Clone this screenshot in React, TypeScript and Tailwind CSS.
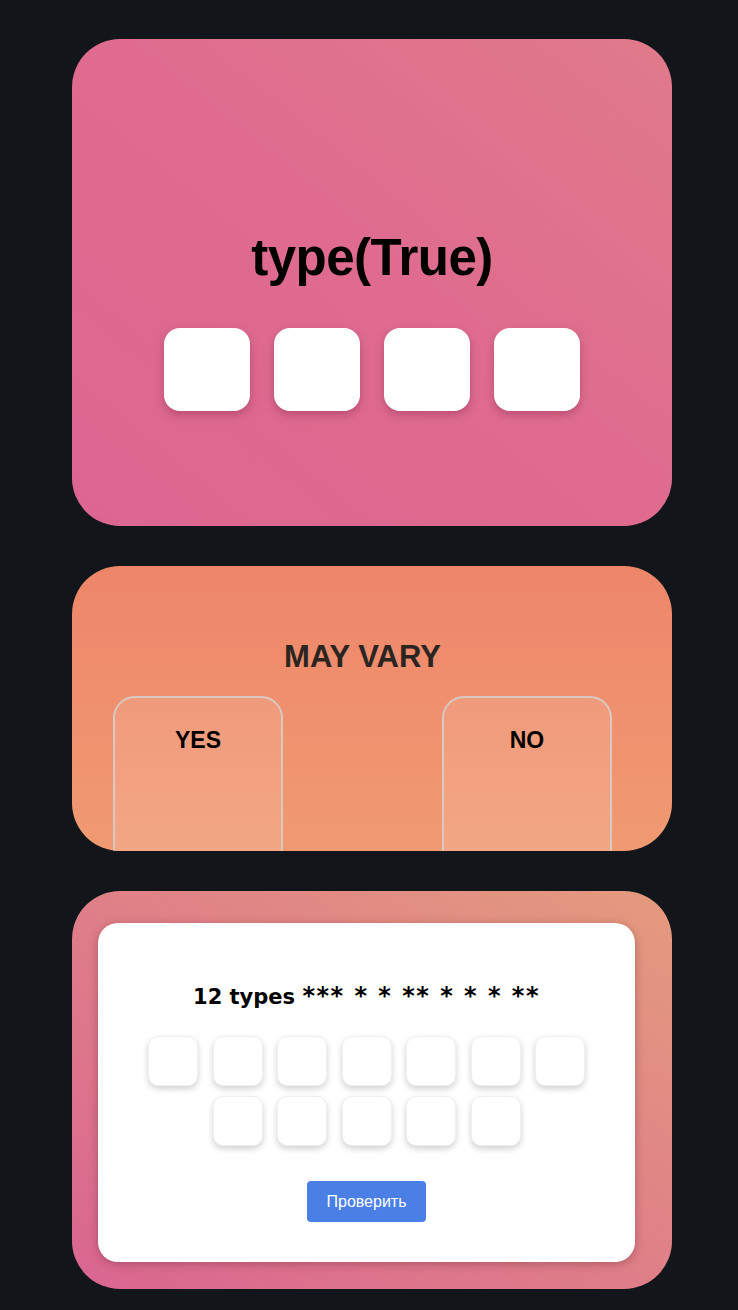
import React from 'react';

const sans = { fontFamily: '"Liberation Sans", Arial, sans-serif' };

// Big pink card with 4 answer slots
const TypeCard = () => (
  <div className="w-[600px] h-[487px] rounded-[48px] bg-linear-to-tr from-[#dc6690] via-[#df6b8f] to-[#e07a8a] flex flex-col items-center pt-[189px]">
    <h1 className="text-[51px] leading-[60px] font-bold text-black tracking-[-0.5px]" style={sans}>type(True)</h1>
    <div className="flex gap-[24px] mt-[40px]">
      {[0, 1, 2, 3].map((i) => (
        <div key={i} className="w-[86px] h-[83px] rounded-[16px] bg-white shadow-[0_4px_8px_rgba(120,30,60,0.35)]" />
      ))}
    </div>
  </div>
);

// Orange card with two drop zones
const VaryCard = () => (
  <div className="w-[600px] h-[285px] rounded-[48px] overflow-hidden bg-linear-to-b from-[#ee866a] to-[#f09a72] pl-[41px] pr-[60px] pt-[73px]" style={sans}>
    <h2 className="text-center text-[31px] leading-[36px] font-bold text-[#2b2522]">MAY VARY</h2>
    <div className="flex justify-between mt-[21px]">
      {['YES', 'NO'].map((label) => (
        <div key={label} className="w-[170px] h-[220px] rounded-[22px] border-2 border-[#d9c9c0] bg-linear-to-b from-[#f09a7c] to-[#f3ac88] pt-[28px]">
          <div className="text-center text-[23px] leading-[28px] font-bold text-black">{label}</div>
        </div>
      ))}
    </div>
  </div>
);

// Card with white panel, 12 slots and a check button
const TypesCard = () => (
  <div className="w-[600px] h-[398px] rounded-[48px] bg-linear-to-tr from-[#da6590] via-[#df7f88] to-[#e49b7e] pl-[26px] pr-[37px] pt-[32px]">
    <div className="h-[339px] rounded-[20px] bg-white shadow-[0_2px_10px_rgba(90,30,40,0.35)] flex flex-col items-center pt-[61px]">
      <div className="h-[25px] text-[21px] leading-[25px] font-bold text-black" style={{ fontFamily: '"DejaVu Sans", Verdana, sans-serif' }}>
        12 types <span className="text-[24px] leading-none tracking-[1.5px]">*** * * ** * * * **</span>
      </div>
      <div className="w-[440px] flex flex-wrap justify-center gap-x-[14.5px] gap-y-[10px] mt-[27px]">
        {Array.from({ length: 12 }).map((_, i) => (
          <div key={i} className="w-[50px] h-[50px] rounded-[10px] bg-white border border-[#f0f0f0] shadow-[0_3px_6px_rgba(0,0,0,0.18)]" />
        ))}
      </div>
      <button className="mt-[35px] w-[119px] h-[41px] rounded-[4px] bg-[#4a80e5] text-white text-[16px]" style={sans}>
        Проверить
      </button>
    </div>
  </div>
);

export default function App() {
  return (
    <div className="min-h-[1310px] bg-[#12161a] pl-[72px] pt-[39px] flex flex-col gap-[40px]">
      <TypeCard />
      <VaryCard />
      <TypesCard />
    </div>
  );
}
